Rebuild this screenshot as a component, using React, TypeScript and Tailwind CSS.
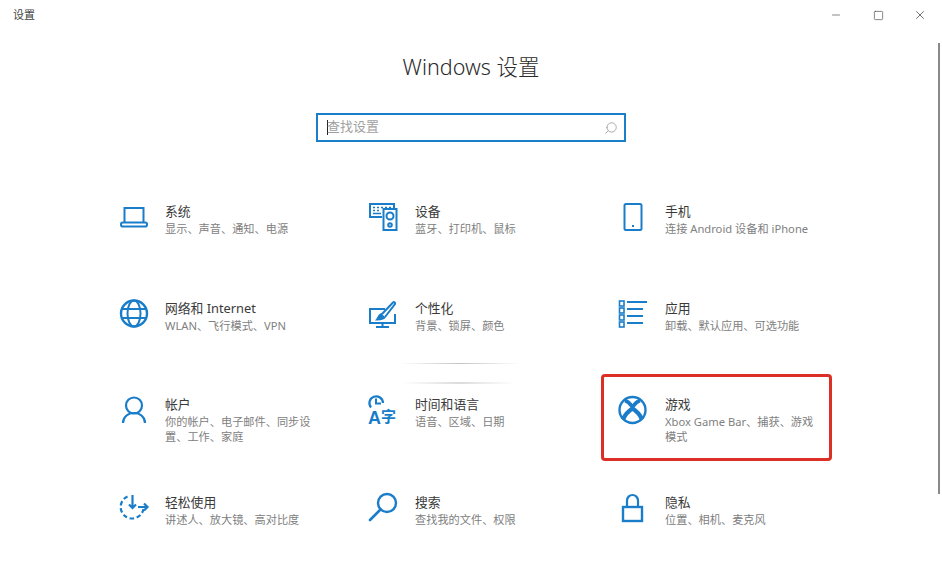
import React from 'react';
import { Minus, Square, X, Search } from 'lucide-react';

const Svg = ({ children }: { children: React.ReactNode }) => (
  <svg width="32" height="30" viewBox="0 0 32 30" fill="none" stroke="#1a7dc9" strokeWidth="2" className="overflow-visible shrink-0">
    {children}
  </svg>
);

const Laptop = () => (
  <Svg>
    <path d="M6.500 19V5h19v14" />
    <rect x="3" y="19.500" width="26" height="4" rx="1.800" />
  </Svg>
);

const Devices = () => (
  <Svg>
    <path d="M14 14H2V1h24v4" />
    <path d="M5 4.500h2M9 4.500h2M13 4.500h2M17 4.500h2M21 4.500h2M5 7.500h2M9 7.500h2M13 7.500h0M5 10.500h8" strokeWidth="1.500" />
    <rect x="15.500" y="6" width="13" height="21" />
    <circle cx="22" cy="13" r="3.500" />
    <circle cx="22" cy="22" r="1.800" />
  </Svg>
);

const Phone = () => (
  <Svg>
    <rect x="6.500" y="1" width="17" height="26" rx="1.500" />
    <path d="M14 23h2" />
  </Svg>
);

const Globe = () => (
  <Svg>
    <circle cx="16" cy="13.500" r="13" strokeWidth="2.400" />
    <ellipse cx="16" cy="13.500" rx="6.500" ry="13" strokeWidth="2" />
    <path d="M4 9h24M4 18h24" />
  </Svg>
);

const Brush = () => (
  <Svg>
    <path d="M17 9H2v14h25V14" />
    <path d="M14.500 23v4M8 27h13" />
    <path d="M14 14 25 2.500c1-1 2.500 0 2 1.500L17 17" />
    <path d="M14 14c-3 0-3 3-5 5.500 3 0 7 0 8-2.500" fill="#1a7dc9" />
  </Svg>
);

const Apps = () => (
  <Svg>
    <rect x="1.500" y="1" width="4.500" height="5" strokeWidth="1.600" />
    <rect x="1.500" y="8" width="4.500" height="5" strokeWidth="1.600" />
    <rect x="1.500" y="15" width="4.500" height="5" strokeWidth="1.600" />
    <rect x="1.500" y="22" width="4.500" height="5" strokeWidth="1.600" />
    <path d="M9 2h20M9 9h16M9 16h16M9 23h16" />
  </Svg>
);

const Person = () => (
  <Svg>
    <circle cx="16" cy="9.500" r="8" strokeWidth="2.200" />
    <path d="M5 27c0-6 5-10 11-10s11 4 11 10" strokeWidth="2.200" />
  </Svg>
);

const Clock = () => (
  <Svg>
    <path d="M3 11.500A6.800 6.800 0 1 1 15 7" strokeWidth="2.200" />
    <path d="M8 2.500V7.500h5" strokeWidth="2" />
    <text x="0" y="28" fontSize="18" fontWeight="700" fill="#1a7dc9" stroke="none" fontFamily="'Liberation Sans', sans-serif">A</text>
    <text x="13" y="25.500" fontSize="15" fontWeight="700" fill="#1a7dc9" stroke="none" fontFamily="'Noto Sans CJK SC', sans-serif">字</text>
  </Svg>
);

const Xbox = () => (
  <Svg>
    <circle cx="14.500" cy="14" r="13" strokeWidth="2.400" />
    <path d="M5 23.500C7 18.500 10.500 15 14.500 12.500 18.500 15 22 18.500 24 23.500" strokeWidth="4.400" />
    <path d="M7 4.500C10 5.500 12.500 8 14.500 11 16.500 8 19 5.500 22 4.500" strokeWidth="3.600" />
  </Svg>
);

const Ease = () => (
  <Svg>
    <path d="M9.500 2.500A11.500 11.500 0 1 0 25.500 15" strokeDasharray="4.500 2.600" strokeWidth="2.200" />
    <path d="M14.500 1v13M11 10.500l3.500 3.500 3.500-3.500" strokeWidth="2.200" />
    <path d="M20 13h9.500M26 9.500l3.500 3.500-3.500 3.500" strokeWidth="2.200" />
  </Svg>
);

const Magnifier = () => (
  <Svg>
    <circle cx="19" cy="9" r="9" strokeWidth="2.400" />
    <path d="M12.500 15.500 2 26" strokeWidth="2.600" strokeLinecap="round" />
  </Svg>
);

const Lock = () => (
  <Svg>
    <rect x="5" y="13" width="19" height="14" strokeWidth="2.400" />
    <path d="M9 13V6.500a5.500 5.500 0 0 1 11 0V13" strokeWidth="2.200" />
  </Svg>
);

const items = [
  { icon: <Laptop />, title: '系统', desc: '显示、声音、通知、电源' },
  { icon: <Devices />, title: '设备', desc: '蓝牙、打印机、鼠标' },
  { icon: <Phone />, title: '手机', desc: '连接 Android 设备和 iPhone' },
  { icon: <Globe />, title: '网络和 Internet', desc: 'WLAN、飞行模式、VPN' },
  { icon: <Brush />, title: '个性化', desc: '背景、锁屏、颜色' },
  { icon: <Apps />, title: '应用', desc: '卸载、默认应用、可选功能' },
  { icon: <Person />, title: '帐户', desc: '你的帐户、电子邮件、同步设置、工作、家庭' },
  { icon: <Clock />, title: '时间和语言', desc: '语音、区域、日期' },
  { icon: <Xbox />, title: '游戏', desc: 'Xbox Game Bar、捕获、游戏模式' },
  { icon: <Ease />, title: '轻松使用', desc: '讲述人、放大镜、高对比度' },
  { icon: <Magnifier />, title: '搜索', desc: '查找我的文件、权限' },
  { icon: <Lock />, title: '隐私', desc: '位置、相机、麦克风' },
];

export default function App() {
  return (
    <div className="relative w-[942px] h-[583px] overflow-hidden bg-white font-['Noto_Sans','Noto_Sans_CJK_SC',sans-serif]">
      {/* Title bar */}
      <div className="flex items-center justify-between h-[30px] pl-[13px]">
        <span className="text-[11px] leading-[30px] text-[#444]">设置</span>
        <div className="flex items-center text-[#444]">
          <div className="flex justify-center w-[42px]"><Minus size={12} strokeWidth={1.3} /></div>
          <div className="flex justify-center w-[42px]"><Square size={11} strokeWidth={1.4} /></div>
          <div className="flex justify-center w-[42px] mr-px"><X size={14} strokeWidth={1.3} /></div>
        </div>
      </div>

      {/* Heading and search */}
      <div className="flex flex-col items-center">
        <h1 className="mt-[22px] h-[30px] text-[21.5px] leading-[30px] font-light text-[#2b2b2b]">Windows 设置</h1>
        <div className="flex items-center justify-between w-[310px] h-[29px] mt-[31px] border-2 border-[#1a7fc9] pl-[9px] pr-[6px]">
          <div className="flex items-center">
            <div className="w-px h-[15px] bg-[#222]" />
            <span className="text-[13px] leading-[17px] -ml-px -mt-[2px] text-[#a0a0a0]">查找设置</span>
          </div>
          <Search size={14} strokeWidth={1.4} className="text-[#999] -scale-x-100" />
        </div>
      </div>

      {/* Category grid */}
      <div className="grid grid-cols-[250px_250px_250px] grid-rows-[97px_96px_98px_auto] mt-[61px] ml-[118px]">
        {items.map((item) => (
          <div key={item.title} className="flex gap-[15px]">
            {item.icon}
            <div className="w-[150px]">
              <div className="mb-px text-[12.8px] leading-[17px] text-[#3a3a3a]">{item.title}</div>
              <div className="text-[11.2px] leading-[15px] text-[#808080]">{item.desc}</div>
            </div>
          </div>
        ))}
      </div>

      {/* Red highlight over 游戏 */}
      <div className="absolute left-[601px] top-[374px] w-[231px] h-[87px] border-[3px] border-[#dc2f26] rounded-[4px]" />

      {/* Scrollbar */}
      <div className="absolute left-[938px] top-[43px] w-[2px] h-[451px] bg-[#8a8a8a]" />

      {/* Faint lines left in the capture */}
      <div className="absolute left-[400px] top-[363px] w-[120px] h-px bg-gradient-to-r from-transparent via-[#c4c4c4] to-transparent" />
      <div className="absolute left-[403px] top-[382px] w-[112px] h-[2px] bg-gradient-to-r from-transparent via-[#dcdcdc] to-transparent" />
    </div>
  );
}
